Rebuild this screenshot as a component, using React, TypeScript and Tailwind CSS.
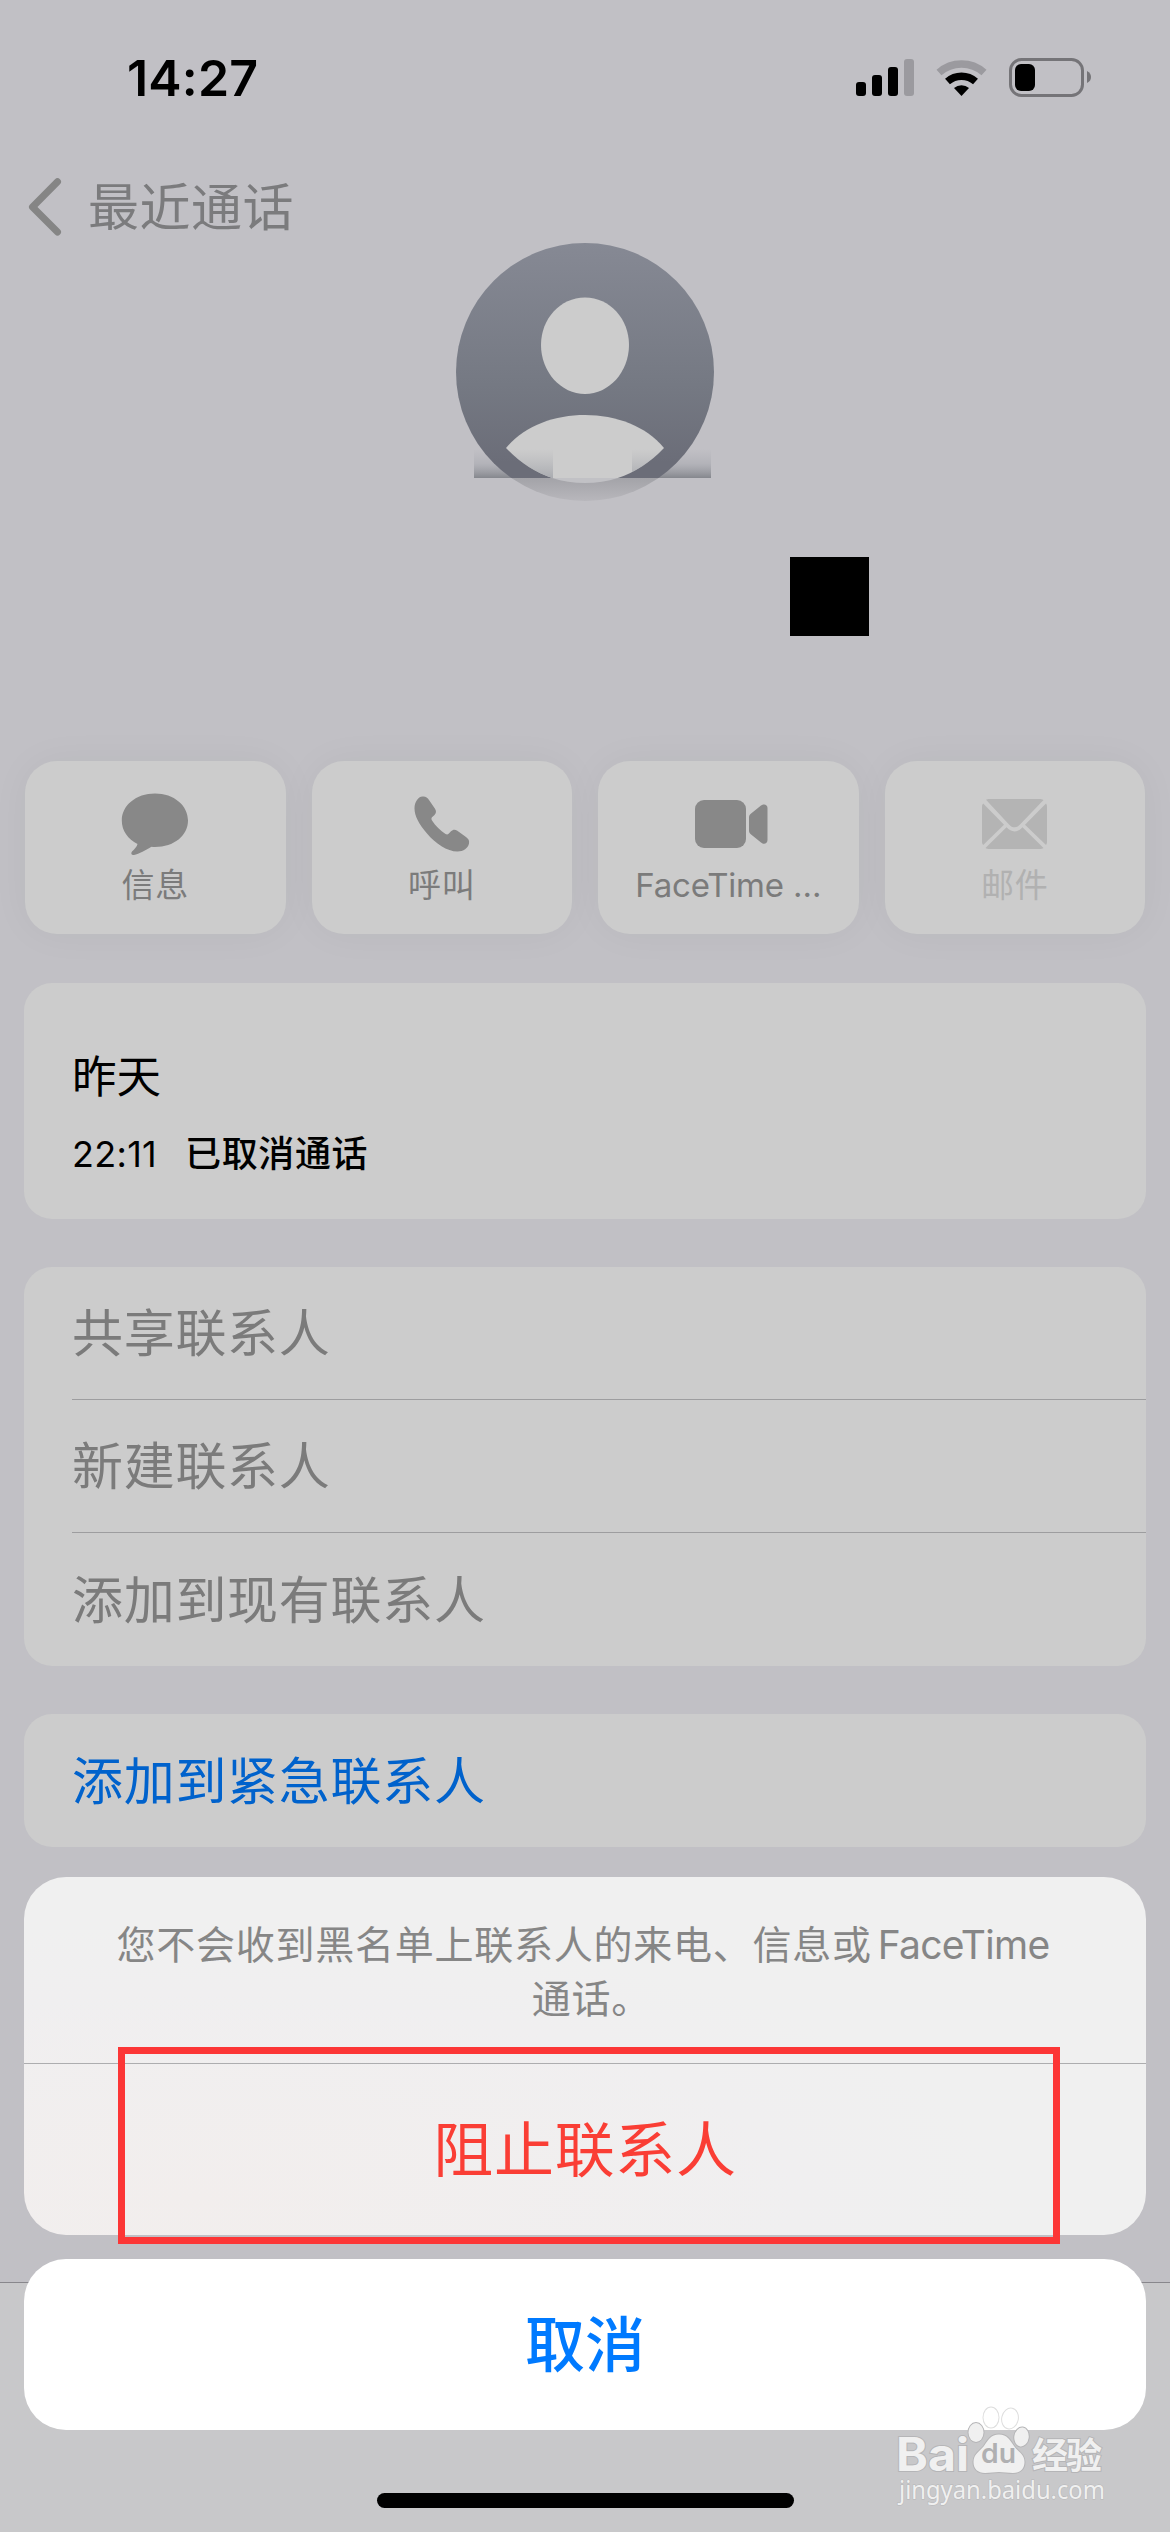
import type { ReactNode } from 'react';
import clsx from 'clsx';

const TORSO = 'M50 205C68 183 98 172 129 172C160 172 190 183 208 205C186 228 160 240 129 240C98 240 72 228 50 205Z';

function StatusBar() {
  return (
    <div className="flex h-[156px] items-start justify-between pl-[127px] pr-[78px]">
      <span className="mt-[48px] text-[50px] leading-[60px] font-semibold tracking-[0.2px] text-black">14:27</span>
      <svg className="mt-[57px]" width="236" height="41" viewBox="0 0 236 41" fill="none">
        <rect x="0" y="25" width="10" height="14" rx="3" fill="#000" />
        <rect x="16" y="18" width="10" height="21" rx="3" fill="#000" />
        <rect x="32" y="10" width="10" height="29" rx="3" fill="#000" />
        <rect x="48" y="2" width="10" height="37" rx="3" fill="#9b9a9f" />
        <path d="M83 15.500A34 34 0 0 1 128 15.500" stroke="#9b9a9f" strokeWidth="7.5" />
        <path d="M91.500 24.500A21.500 21.500 0 0 1 119.500 24.500" stroke="#000" strokeWidth="7.5" />
        <path d="M98 31A11.500 11.500 0 0 1 113 31L105.500 39Z" fill="#000" />
        <rect x="154.500" y="2.500" width="72" height="36" rx="11" stroke="#757478" strokeWidth="3" />
        <rect x="159" y="7" width="20" height="27" rx="6" fill="#000" />
        <path d="M231 14C234 15.500 235 18 235 20C235 22.500 234 24.500 231 26Z" fill="#757478" />
      </svg>
    </div>
  );
}

function Avatar() {
  return (
    <svg width="258" height="258" viewBox="0 0 258 258" className="overflow-visible">
      <defs>
        <linearGradient id="disc" x1="0" y1="0" x2="0" y2="1">
          <stop offset="0" stopColor="#868994" />
          <stop offset="0.55" stopColor="#757983" />
          <stop offset="0.85" stopColor="#6b6d78" />
          <stop offset="1" stopColor="#6b6d78" />
        </linearGradient>
        <linearGradient id="fade" gradientUnits="userSpaceOnUse" x1="0" y1="235" x2="0" y2="258">
          <stop offset="0" stopColor="#a3a3a8" />
          <stop offset="1" stopColor="#b8b7bc" />
        </linearGradient>
        <linearGradient id="smear" x1="0" y1="0" x2="0" y2="1">
          <stop offset="0" stopColor="#a8a9b0" stopOpacity="0" />
          <stop offset="0.5" stopColor="#a5a6ad" stopOpacity="0.5" />
          <stop offset="1" stopColor="#85878d" />
        </linearGradient>
        <linearGradient id="smearInner" x1="0" y1="0" x2="0" y2="1">
          <stop offset="0" stopColor="#b5b6ba" stopOpacity="0" />
          <stop offset="1" stopColor="#a9abb0" />
        </linearGradient>
        <clipPath id="top"><rect width="258" height="235" /></clipPath>
        <clipPath id="bottom"><rect y="235" width="258" height="23" /></clipPath>
        <clipPath id="torso"><path d={TORSO} /></clipPath>
      </defs>
      <rect x="18" y="206" width="79" height="29" fill="url(#smear)" />
      <rect x="176" y="206" width="79" height="29" fill="url(#smear)" />
      <circle cx="129" cy="129" r="129" fill="url(#disc)" clipPath="url(#top)" />
      <g clipPath="url(#bottom)">
        <circle cx="129" cy="129" r="129" fill="url(#fade)" />
        <path d={TORSO} fill="#c1c1c5" />
      </g>
      <path d="M129 54.500C154 54.500 173 76 173 102C173 129 153 151 129 151C105 151 85 129 85 102C85 76 104 54.500 129 54.500Z" fill="#ccc" />
      <g clipPath="url(#top)">
        <path d={TORSO} fill="#ccc" />
        <g clipPath="url(#torso)">
          <rect x="18" y="206" width="79" height="29" fill="url(#smearInner)" />
          <rect x="176" y="206" width="79" height="29" fill="url(#smearInner)" />
        </g>
      </g>
    </svg>
  );
}

function BubbleIcon() {
  return (
    <svg width="68" height="64" viewBox="0 0 68 64" fill="#888">
      <path d="M34 1.500C53 1.500 67 13.500 67 28.500C67 43.500 53 55 34 55C32.500 55 31.500 54.900 30.500 54.800C25 58 18 62 13 63C10.500 63.400 9.500 61.500 11 59.500C13.500 57 16 54.500 16.500 52C7 47 .8 39 .8 28.500C.8 13.500 15 1.500 34 1.500Z" />
    </svg>
  );
}

function PhoneIcon() {
  return (
    <svg width="56" height="56" viewBox="0 0 56 56" fill="#888">
      <path d="M8.500 .6C11.500 .3 13.500 1.500 15 4L21 12.800C22.500 15.200 22.300 17 20.500 19L18 21.300C17.200 22.200 17.300 23.300 18 24.500C21.500 30 26.500 34.800 31.500 38C32.700 38.700 33.800 38.600 34.600 37.800L37 35.300C39 33.300 41 33.200 43.300 34.800L52 41C54.500 42.800 55.500 44.700 55 47.500C54 52 49.500 55.500 43.500 55.500C33 55.500 21.500 47.500 13 37.500C5 28 .5 20 .5 12.500C.6 6 4 1 8.500 .6Z" />
    </svg>
  );
}

function VideoIcon() {
  return (
    <svg className="ml-[7px]" width="73" height="48" viewBox="0 0 73 48" fill="#888">
      <rect width="51" height="48" rx="9" />
      <path d="M54 17.500C54 16 54.500 15 55.500 14L66 5.500C69 3.500 72.500 4.500 72.500 8V40C72.500 43.500 69 45 66 42.500L55.500 34C54.500 33 54 32 54 30.500Z" />
    </svg>
  );
}

function MailIcon() {
  return (
    <svg width="65" height="50" viewBox="0 0 65 50" fill="#b4b4b4">
      <path d="M4 .8C5 .2 6 0 7.500 0H57.500C59 0 60 .2 61.500 .9L38 25.500C34.500 29.300 30.500 29.300 27 25.500Z" />
      <path d="M1.200 4.500L22 25.800L1.200 46C.3 45 0 44 0 42.500V8C0 6.500 .3 5.500 1.200 4.500Z" />
      <path d="M64 4.500C64.700 5.500 65 6.500 65 8V42.500C65 44 64.700 45 64 46L43 25.800Z" />
      <path d="M3.500 49L24.500 28.300C29.500 33.800 35.500 33.800 40.500 28.300L61.500 49C60.500 49.700 59 50 57.500 50H7.500C6 50 4.500 49.700 3.500 49Z" />
    </svg>
  );
}

const actions: { label: string; icon: ReactNode; disabled?: boolean }[] = [
  { label: '信息', icon: <BubbleIcon /> },
  { label: '呼叫', icon: <PhoneIcon /> },
  { label: 'FaceTime …', icon: <VideoIcon /> },
  { label: '邮件', icon: <MailIcon />, disabled: true },
];

const contactRows = ['共享联系人', '新建联系人', '添加到现有联系人'];

function Card({ className, children }: { className?: string; children: ReactNode }) {
  return <div className={clsx('mx-6 rounded-[28px] bg-[#ccc]', className)}>{children}</div>;
}

function ActionSheet() {
  return (
    <div className="absolute inset-x-6 top-[1877px]">
      <div className="h-[358px] overflow-hidden rounded-[42px] bg-[#f0f0f0] bg-[radial-gradient(ellipse_at_15%_90%,#f2eeed_0%,#f0eff0_45%,#f0f0f0_60%)]">
        <div className="h-[187px] border-b border-[#adadaf] pt-[41px] text-center text-[39px] leading-[54px] tracking-[0.75px] text-[#868686]">
          <p className="-ml-1">您不会收到黑名单上联系人的来电、信息或<span className="ml-[6px] tracking-[-0.7px]">FaceTime</span></p>
          <p className="pl-[13px]">通话。</p>
        </div>
        <div className="flex h-[171px] items-center justify-center pt-px text-[60px] tracking-[0.7px] text-[#fa3e35]">阻止联系人</div>
      </div>
      <div className="mt-6 flex h-[171px] items-center justify-center rounded-[42px] bg-white text-[60px] font-medium text-[#007aff]">
        取消
      </div>
      <div className="absolute top-[170px] left-[94px] h-[197px] w-[942px] border-[7px] border-[#fc3636]" />
    </div>
  );
}

function Watermark() {
  return (
    <svg className="absolute top-[2400px] left-[890px]" width="230" height="120" viewBox="0 0 230 120">
      <g fill="#f0f0f0" stroke="#b5b5b7" strokeWidth="2" paintOrder="stroke">
        <text x="6" y="71" fontFamily="Inter, sans-serif" fontSize="46" fontWeight="700" textLength="73" lengthAdjust="spacingAndGlyphs">Bai</text>
        <ellipse cx="86" cy="32.500" rx="7.500" ry="9.500" />
        <ellipse cx="101" cy="17.500" rx="7.500" ry="10" fill="#fff" stroke="#dedede" />
        <ellipse cx="120" cy="18.500" rx="7.800" ry="10" fill="#fff" stroke="#dedede" transform="rotate(12 120 18.500)" />
        <ellipse cx="131.500" cy="37" rx="7.200" ry="9.500" transform="rotate(8 131.500 37)" />
        <path d="M109 34.500C117 34.500 120 40 124 46C128 52 134.500 54 134.500 62C134.500 69 130 73 123 73C118 73 114 72 109 72C104 72 100 73 95 73C88 73 83.500 69 83.500 62C83.500 54 90 51 94 46C98 40 101 34.500 109 34.500Z" />
        <text x="142" y="69" fontFamily="'Noto Sans CJK SC', sans-serif" fontSize="36" fontWeight="700" textLength="70">经验</text>
        <text x="9" y="99" fontFamily="'Noto Sans', sans-serif" fontSize="25" textLength="206" lengthAdjust="spacingAndGlyphs" strokeWidth="1">jingyan.baidu.com</text>
      </g>
      <text x="91" y="63" fontFamily="Inter, sans-serif" fontSize="27" fontWeight="600" fill="#b0b0b2" textLength="35" lengthAdjust="spacingAndGlyphs">du</text>
    </svg>
  );
}

export default function App() {
  return (
    <div className="relative h-[2532px] w-[1170px] overflow-hidden bg-[#c1c0c5] font-['Inter','Noto_Sans_CJK_SC',sans-serif]">
      <StatusBar />

      <div className="flex h-[87px] items-start pt-[22px] pl-[28px]">
        <svg width="34" height="58" viewBox="0 0 34 58" fill="none" stroke="#858585" strokeWidth="7" strokeLinecap="round" strokeLinejoin="round">
          <path d="M29.500 3.800L4.500 29L29.500 54" />
        </svg>
        <span className="mt-px ml-[26px] text-[51px] leading-[58px] tracking-[0.5px] text-[#7b7b7d]">最近通话</span>
      </div>

      <div className="flex h-[518px] justify-center">
        <Avatar />
      </div>
      <div className="absolute top-[557px] left-[790px] size-[79px] bg-black" />

      <div className="grid grid-cols-4 gap-[26px] px-[25px]">
        {actions.map(({ label, icon, disabled }) => (
          <div
            key={label}
            className={clsx(
              'flex h-[173px] flex-col items-center rounded-[32px] bg-[#ccc] pt-[31px] shadow-[0_0_40px_rgba(0,0,0,0.04)]',
              disabled ? 'text-[#b1b1b1]' : 'text-[#7b7b7b]'
            )}
          >
            <div className="flex h-16 items-center">{icon}</div>
            <span className={clsx('mt-[9px] text-[33px] leading-[40px]', label.startsWith('F') ? '-tracking-[0.2px]' : 'tracking-[0.8px]')}>
              {label}
            </span>
          </div>
        ))}
      </div>

      <Card className="mt-[49px] h-[236px] pt-[67px] pl-[48px] text-black">
        <div className="text-[44.5px] leading-[54px]">昨天</div>
        <div className="mt-[29px] flex gap-[28px] text-[36px] leading-[42px]">
          <span className="tracking-[0.3px]">22:11</span>
          <span className="font-medium tracking-[0.6px]">已取消通话</span>
        </div>
      </Card>

      <Card className="mt-12 pl-[48px]">
        {contactRows.map((row, i) => (
          <div
            key={row}
            className={clsx(
              'flex h-[133px] items-center pt-[3px] text-[51px] tracking-[0.7px] text-[#7b7b7b]',
              i < contactRows.length - 1 && 'border-b border-[#9d9d9f]'
            )}
          >
            {row}
          </div>
        ))}
      </Card>

      <Card className="mt-12 flex h-[133px] items-center pt-[3px] pl-[48px] text-[51px] tracking-[0.7px] text-[#0062cc]">
        添加到紧急联系人
      </Card>

      {/* tab bar behind the sheet */}
      <div className="mt-[435px] flex h-[250px] justify-center border-t border-[#88878c] bg-[#c8c8ca]">
        <div className="mt-[210px] h-[15px] w-[417px] rounded-full bg-black" />
      </div>

      <ActionSheet />
      <Watermark />
    </div>
  );
}
